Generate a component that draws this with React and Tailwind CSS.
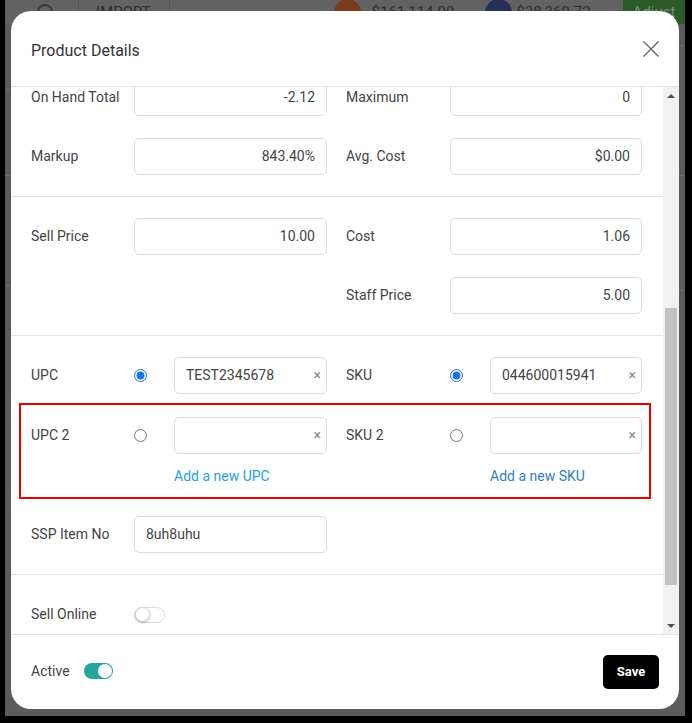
import React, { useLayoutEffect, useRef } from 'react';

const FONT = { fontFamily: 'Roboto, "Liberation Sans", sans-serif' };

function Box({ value, align = 'right' }) {
  return (
    <div
      className={`h-[37px] w-full rounded-[5px] border border-[#dcdcdc] bg-white px-[11px] text-[14px] leading-[35px] text-[#444] ${
        align === 'right' ? 'text-right' : 'text-left'
      }`}
    >
      {value}
    </div>
  );
}

function Half({ label, value, first, align }) {
  return (
    <div className={`flex items-center ${first ? 'w-[296px]' : 'ml-[19px] flex-1'}`}>
      <div className={`${first ? 'w-[103px]' : 'w-[104px]'} shrink-0 text-[14px] text-[#444]`}>{label}</div>
      <div className="flex-1">
        <Box value={value} align={align} />
      </div>
    </div>
  );
}

function Row({ left, right }) {
  return (
    <div className="flex h-[37px] items-center">
      {left ? <Half first {...left} /> : <div className="w-[296px]" />}
      {right && <Half {...right} />}
    </div>
  );
}

function CodeHalf({ label, value, checked, first }) {
  return (
    <div className={`flex items-center ${first ? 'w-[296px]' : 'ml-[19px] flex-1'}`}>
      <div className={`${first ? 'w-[103px]' : 'w-[104px]'} shrink-0 text-[14px] text-[#444]`}>{label}</div>
      <input
        type="radio"
        readOnly
        checked={checked}
        className="m-0 h-[13px] w-[13px] shrink-0 accent-[#1a73e8]"
      />
      <div className="relative ml-[27px] flex-1">
        <div className="h-[37px] rounded-[5px] border border-[#dcdcdc] pl-[11px] pr-[24px] text-[14px] leading-[35px] text-[#444]">
          {value}
        </div>
        <span className="absolute right-[6px] top-[9px] text-[14px] leading-[18px] text-[#888]">×</span>
      </div>
    </div>
  );
}

function Toggle({ on }) {
  return on ? (
    <div className="flex h-[16px] w-[29px] items-center justify-end rounded-full bg-[#26a69a] p-[1px]">
      <div className="h-[14px] w-[14px] rounded-full bg-white" />
    </div>
  ) : (
    <div className="flex h-[16px] w-[31px] items-center rounded-full border border-[#dcdcdc] bg-white">
      <div className="h-[15px] w-[15px] rounded-full border border-[#d0d0d0] bg-white shadow-[0_1px_2px_rgba(0,0,0,0.25)]" />
    </div>
  );
}

function ToggleRow({ label, on }) {
  return (
    <div className="flex h-[37px] items-center">
      <div className="w-[103px] text-[14px] text-[#444]">{label}</div>
      <Toggle on={on} />
    </div>
  );
}

function Section({ children, className = '' }) {
  return (
    <div className={`flex flex-col gap-[22px] border-b border-[#e4e4e4] pl-5 pr-[21px] ${className}`}>{children}</div>
  );
}

function Scrollbar() {
  return (
    <div className="flex w-[16px] shrink-0 flex-col bg-[#f1f1f1]">
      <div className="flex h-[16px] items-center justify-center pt-[2px]">
        <div className="h-0 w-0 border-x-[4px] border-b-[4px] border-x-transparent border-b-[#505050]" />
      </div>
      <div className="flex-1 px-[2px]">
        <div className="mt-[205px] h-[277px] bg-[#c1c1c1]" />
      </div>
      <div className="flex h-[16px] items-center justify-center">
        <div className="h-0 w-0 border-x-[4px] border-t-[4px] border-x-transparent border-t-[#505050]" />
      </div>
    </div>
  );
}

// dimmed page behind the dialog: only the top strip peeks out
function Backdrop() {
  return (
    <div className="absolute inset-0 overflow-hidden bg-[#5c5c5c]">
      <div className="flex h-[24px] items-center bg-[#626262] text-[15px] text-[#2e2e2e]">
        <div className="ml-[32px] h-[16px] w-[16px] rounded-full border-2 border-[#3a3a3a]" />
        <div className="ml-[25px] h-full border-l border-[#555]" />
        <span className="ml-[17px]">IMPORT</span>
        <div className="ml-[18px] h-full border-l border-[#555]" />
        <div className="ml-[164px] h-[27px] w-[27px] rounded-full bg-[#7a3a1c]" />
        <span className="ml-[11px]">$161,114.00</span>
        <div className="ml-[31px] h-[27px] w-[27px] rounded-full bg-[#27305a]" />
        <span className="ml-[4px]">$38,369.72</span>
        <div className="ml-auto flex h-full w-[62px] items-center justify-center bg-[#2c5a28] text-[#7c8f7a]">Adjust</div>
      </div>
      <div className="absolute left-0 top-[89px] h-px w-[6px] bg-[#6c6c6c]" />
      <div className="absolute left-0 top-[175px] h-px w-[6px] bg-[#6c6c6c]" />
      <div className="absolute left-0 top-[285px] h-px w-[6px] bg-[#6c6c6c]" />
      <div className="absolute right-0 top-[45px] h-px w-[6px] bg-[#6c6c6c]" />
      <div className="absolute right-0 top-[175px] h-px w-[6px] bg-[#6c6c6c]" />
      <div className="absolute right-0 top-[290px] h-px w-[6px] bg-[#6c6c6c]" />
    </div>
  );
}

export default function App() {
  const scrollRef = useRef(null);

  useLayoutEffect(() => {
    if (scrollRef.current) scrollRef.current.scrollTop = 342;
  }, []);

  return (
    <div className="h-[723px] w-[692px] bg-black pb-[7px] pl-[5px] pr-[7px]" style={FONT}>
      <div className="relative h-full w-full pl-[6px] pt-[11px]">
        <Backdrop />
        <div className="relative flex h-[698px] w-[668px] flex-col overflow-hidden rounded-[20px] bg-white">
          <div className="flex h-[76px] shrink-0 items-center justify-between border-b border-[#e4e4e4] pl-5 pr-[20px] pt-[4px]">
            <h2 className="text-[16px] text-[#333]">Product Details</h2>
            <svg width="16" height="16" viewBox="0 0 16 16" className="-mt-[3px]">
              <path d="M0.5 0.5 L15.5 15.5 M15.5 0.5 L0.5 15.5" stroke="#666" strokeWidth="1.4" fill="none" />
            </svg>
          </div>

          <div className="flex h-[547px] shrink-0">
            <div ref={scrollRef} className="flex-1 overflow-hidden">
              <Section className="py-5">
                <Row left={{ label: 'Name', value: 'Test Product', align: 'left' }} right={{ label: 'Brand', value: '' }} />
                <Row left={{ label: 'Department', value: 'Grocery', align: 'left' }} right={{ label: 'Category', value: 'Snacks', align: 'left' }} />
                <Row left={{ label: 'Vendor', value: 'SSP', align: 'left' }} right={{ label: 'Size', value: '' }} />
                <Row left={{ label: 'Tax', value: 'Default', align: 'left' }} right={{ label: 'Unit', value: 'Each', align: 'left' }} />
              </Section>

              <Section className="pb-[21px] pt-5">
                <Row left={{ label: 'On Hand', value: '-2.12' }} right={{ label: 'Minimum', value: '0' }} />
                <Row left={{ label: 'On Hand Total', value: '-2.12' }} right={{ label: 'Maximum', value: '0' }} />
                <Row left={{ label: 'Markup', value: '843.40%' }} right={{ label: 'Avg. Cost', value: '$0.00' }} />
              </Section>

              <Section className="pb-[21px] pt-[21px]">
                <Row left={{ label: 'Sell Price', value: '10.00' }} right={{ label: 'Cost', value: '1.06' }} />
                <Row right={{ label: 'Staff Price', value: '5.00' }} />
              </Section>

              <div className="border-b border-[#e4e4e4] pb-[21px] pl-5 pr-[21px] pt-[21px]">
                <div className="flex h-[37px] items-center">
                  <CodeHalf first label="UPC" value="TEST2345678" checked />
                  <CodeHalf label="SKU" value="044600015941" checked />
                </div>

                <div className="ml-[-12px] mr-[-9px] mt-[9px] border-2 border-[#ee0000] pb-[11px] pl-[10px] pr-[7px] pt-[12px]">
                  <div className="flex h-[37px] items-center">
                    <CodeHalf first label="UPC 2" value="" checked={false} />
                    <CodeHalf label="SKU 2" value="" checked={false} />
                  </div>
                  <div className="mt-[12px] flex h-[20px] items-center text-[14px]">
                    <div className="w-[296px] pl-[143px] text-[#1ea0e6]">Add a new UPC</div>
                    <div className="ml-[19px] pl-[144px] text-[#2f7fc4]">Add a new SKU</div>
                  </div>
                </div>

                <div className="mt-[17px]">
                  <Row left={{ label: 'SSP Item No', value: '8uh8uhu', align: 'left' }} />
                </div>
              </div>

              <div className="flex flex-col gap-[22px] pb-5 pl-5 pr-[21px] pt-[21px]">
                <ToggleRow label="Sell Online" on={false} />
                <ToggleRow label="Track Stock" on={false} />
              </div>
            </div>
            <Scrollbar />
          </div>

          <div className="flex flex-1 items-center justify-between border-t border-[#e4e4e4] pl-5 pr-[20px]">
            <div className="-mt-[2px] flex items-center gap-[14px]">
              <span className="text-[14px] text-[#444]">Active</span>
              <Toggle on />
            </div>
            <button className="h-[34px] w-[56px] rounded-[5px] bg-black text-[13px] font-bold text-white">Save</button>
          </div>
        </div>
      </div>
    </div>
  );
}
